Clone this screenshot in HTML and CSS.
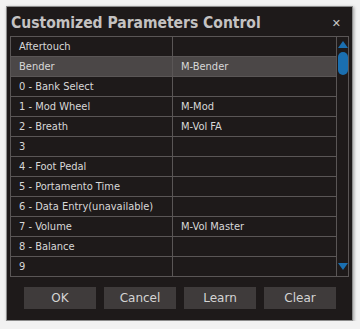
FILE: index.html
```html
<!DOCTYPE html>
<html lang="en">
<head>
    <meta charset="UTF-8">
    <title>Customized Parameters Control</title>
    <link rel="stylesheet" href="styles.css">
</head>
<body>
    <div class="dialog">
        <div class="titlebar">
            <span class="title">Customized Parameters Control</span>
            <span class="close">&#x2715;</span>
        </div>
        <div class="list">
            <div class="rows">
                <div class="row"><span class="c1">Aftertouch</span><span class="c2"></span></div>
                <div class="row sel"><span class="c1">Bender</span><span class="c2">M-Bender</span></div>
                <div class="row"><span class="c1">0 - Bank Select</span><span class="c2"></span></div>
                <div class="row"><span class="c1">1 - Mod Wheel</span><span class="c2">M-Mod</span></div>
                <div class="row"><span class="c1">2 - Breath</span><span class="c2">M-Vol FA</span></div>
                <div class="row"><span class="c1">3</span><span class="c2"></span></div>
                <div class="row"><span class="c1">4 - Foot Pedal</span><span class="c2"></span></div>
                <div class="row"><span class="c1">5 - Portamento Time</span><span class="c2"></span></div>
                <div class="row"><span class="c1">6 - Data Entry(unavailable)</span><span class="c2"></span></div>
                <div class="row"><span class="c1">7 - Volume</span><span class="c2">M-Vol Master</span></div>
                <div class="row"><span class="c1">8 - Balance</span><span class="c2"></span></div>
                <div class="row"><span class="c1">9</span><span class="c2"></span></div>
            </div>
            <div class="scroll">
                <svg class="arrow up" width="10" height="7" viewBox="0 0 10 7"><polygon points="5,0 10,7 0,7" fill="#1a6fb0"/></svg>
                <div class="thumb"></div>
                <div class="track"></div>
                <svg class="arrow down" width="10" height="7" viewBox="0 0 10 7"><polygon points="0,0 10,0 5,7" fill="#1a6fb0"/></svg>
            </div>
        </div>
        <div class="buttons">
            <button>OK</button>
            <button>Cancel</button>
            <button>Learn</button>
            <button>Clear</button>
        </div>
    </div>
</body>
</html>
```

FILE: styles.css
```css
body {
    margin: 0;
    padding: 6px 0 0 6px;
    background-color: #f2f2f2;
    font-family: "DejaVu Sans Condensed", "DejaVu Sans", Verdana, sans-serif;
}
.dialog {
    width: 347px;
    height: 315px;
    box-sizing: border-box;
    background-color: #1e1a1a;
    border: 1px solid #8c8c8c;
    box-shadow: 1px 1px 3px rgba(0, 0, 0, 0.35);
    padding: 0 3px 0 3px;
    display: flex;
    flex-direction: column;
}
.titlebar {
    height: 29px;
    display: flex;
    align-items: center;
    justify-content: space-between;
}
.title {
    color: #c4c2c2;
    font-size: 15.5px;
    font-weight: bold;
    padding-top: 3px;
    padding-left: 1px;
}
.close {
    color: #c8c8c8;
    font-family: "DejaVu Sans", sans-serif;
    font-size: 11px;
    margin-right: 8px;
    padding-top: 4px;
}
.list {
    display: flex;
    width: 339px;
    border: 1px solid #5a5656;
    border-right: 0;
    box-sizing: border-box;
}
.rows {
    width: 326px;
}
.row {
    display: flex;
    height: 20px;
    border-bottom: 1px solid #5a5656;
    box-sizing: border-box;
    color: #d8d8d8;
    font-size: 11px;
    line-height: 20px;
}
.row:last-child {
    border-bottom: 0;
    height: 19px;
}
.row.sel {
    background-color: #4b4747;
}
.c1 {
    width: 162px;
    padding-left: 8px;
    border-right: 1px solid #5a5656;
    box-sizing: border-box;
    white-space: nowrap;
}
.c2 {
    padding-left: 8px;
}
.scroll {
    width: 13px;
    border-left: 1px solid #5a5656;
    border-right: 1px solid #5a5656;
    display: flex;
    flex-direction: column;
    align-items: center;
    box-sizing: border-box;
    height: 239px;
}
.arrow.up {
    margin-top: 4px;
}
.thumb {
    width: 10px;
    height: 23px;
    margin-top: 4px;
    border-radius: 5px;
    background-color: #1a6fb0;
}
.track {
    flex: 1;
}
.arrow.down {
    margin-bottom: 6px;
}
.buttons {
    display: flex;
    gap: 8px;
    padding-left: 14px;
    margin-top: 10px;
}
button {
    width: 72px;
    height: 22px;
    border: none;
    background-color: #3f3b3b;
    color: #d4d4d4;
    font-family: "DejaVu Sans", Verdana, sans-serif;
    font-size: 12px;
    padding: 0;
}
```
